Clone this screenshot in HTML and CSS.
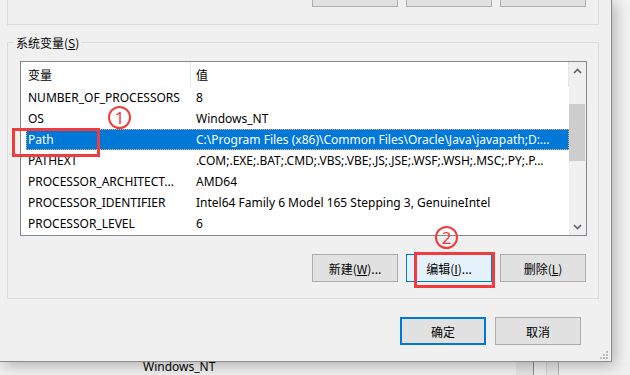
FILE: index.html
```html
<!DOCTYPE html>
<html lang="zh-CN">
<head>
<meta charset="utf-8">
<title>环境变量</title>
<link rel="stylesheet" href="styles.css">
</head>
<body>
<div class="screen">
  <div class="dialog">
    <div class="user-group">
      <span class="top-btn"></span>
      <span class="top-btn"></span>
      <span class="top-btn"></span>
    </div>

    <fieldset class="sys-group">
      <legend>系统变量(<u>S</u>)</legend>
      <div class="listview">
        <div class="list-main">
          <div class="list-head">
            <div class="h1">变量</div>
            <div class="h2">值</div>
          </div>
          <div class="row"><div class="c1">NUMBER_OF_PROCESSORS</div><div class="c2">8</div></div>
          <div class="row"><div class="c1">OS</div><div class="c2">Windows_NT</div></div>
          <div class="row sel"><div class="c1">Path</div><div class="c2">C:\Program Files (x86)\Common Files\Oracle\Java\javapath;D:...</div></div>
          <div class="row"><div class="c1">PATHEXT</div><div class="c2">.COM;.EXE;.BAT;.CMD;.VBS;.VBE;.JS;.JSE;.WSF;.WSH;.MSC;.PY;.P...</div></div>
          <div class="row"><div class="c1">PROCESSOR_ARCHITECT...</div><div class="c2">AMD64</div></div>
          <div class="row"><div class="c1">PROCESSOR_IDENTIFIER</div><div class="c2">Intel64 Family 6 Model 165 Stepping 3, GenuineIntel</div></div>
          <div class="row"><div class="c1">PROCESSOR_LEVEL</div><div class="c2">6</div></div>
        </div>
        <div class="vscroll">
          <div class="arrow">
            <svg width="9" height="6" viewBox="0 0 9 6"><path d="M1 5 L4.5 1.5 L8 5" fill="none" stroke="#606060" stroke-width="1.6"/></svg>
          </div>
          <div class="track"><div class="thumb"></div></div>
          <div class="arrow">
            <svg width="9" height="6" viewBox="0 0 9 6"><path d="M1 1 L4.5 4.5 L8 1" fill="none" stroke="#606060" stroke-width="1.6"/></svg>
          </div>
        </div>
      </div>
      <div class="btn-row">
        <button class="btn">新建(<u>W</u>)...</button>
        <button class="btn hover">编辑(<u>I</u>)...</button>
        <button class="btn">删除(<u>L</u>)</button>
      </div>
    </fieldset>

    <div class="footer">
      <button class="btn default">确定</button>
      <button class="btn">取消</button>
    </div>

    <svg class="grip" width="8" height="8" viewBox="0 0 8 8">
      <rect x="6" y="0" width="2" height="2" fill="#bcbcbc"/>
      <rect x="3" y="3" width="2" height="2" fill="#bcbcbc"/>
      <rect x="6" y="3" width="2" height="2" fill="#bcbcbc"/>
      <rect x="0" y="6" width="2" height="2" fill="#bcbcbc"/>
      <rect x="3" y="6" width="2" height="2" fill="#bcbcbc"/>
      <rect x="6" y="6" width="2" height="2" fill="#bcbcbc"/>
    </svg>
  </div>

  <div class="behind">
    <span class="bt-text">Windows_NT</span>
    <span class="bt-scroll"><span class="seg a"></span><span class="seg b"></span><span class="seg c"></span></span>
  </div>

  <div class="mark mark1"></div>
  <div class="mark mark2"></div>
  <div class="num num1">1</div>
  <div class="num num2">2</div>
</div>
</body>
</html>
```
FILE: styles.css
```css
* { box-sizing: border-box; }

body {
  margin: 0;
  background: #f2f2f2;
  font-family: "Noto Sans", "Noto Sans CJK SC", sans-serif;
  font-size: 12px;
  color: #000;
}

.screen {
  position: relative;
  width: 630px;
  height: 375px;
  overflow: hidden;
  background: #f2f2f2;
}

.dialog {
  position: relative;
  z-index: 1;
  width: 612px;
  height: 362px;
  background: #f0f0f0;
  border-right: 1px solid #8a8a8a;
  border-bottom: 1px solid #8a8a8a;
  box-shadow: 3px 3px 14px rgba(0, 0, 0, 0.28);
  display: flex;
  flex-direction: column;
}

/* upper (user variables) group, only its bottom is visible */
.user-group {
  height: 25px;
  margin: 0 12px 0 7px;
  border: 1px solid #dcdcdc;
  border-top: 0;
  display: flex;
  justify-content: flex-end;
  align-items: flex-start;
  gap: 8px;
  padding-right: 12px;
  flex: none;
}

.top-btn {
  width: 86px;
  height: 7px;
  background: #e1e1e1;
  border: 1px solid #adadad;
  border-top: 0;
}

/* system variables group */
.sys-group {
  margin: 10px 12px 0 7px;
  padding: 11px 12px 16px 12px;
  border: 1px solid #dcdcdc;
  min-width: 0;
  flex: none;
}

.sys-group legend {
  padding: 0 2px;
  margin-left: -6px;
  line-height: 15px;
  font-size: 12px;
  font-family: "Noto Sans CJK SC", "Noto Sans", sans-serif;
}

.listview {
  height: 175px;
  margin-right: -1px;
  border: 1px solid #828790;
  background: #fff;
  display: flex;
}

.list-main {
  flex: 1;
  display: flex;
  flex-direction: column;
  min-width: 0;
}

.list-head {
  height: 25px;
  display: flex;
  flex: none;
  font-family: "Noto Sans CJK SC", sans-serif;
}

.list-head .h1 {
  width: 170px;
  padding-left: 7px;
  line-height: 25px;
  border-right: 1px solid #e5e5e5;
}

.list-head .h2 {
  flex: 1;
  padding-left: 5px;
  line-height: 25px;
  border-right: 1px solid #e5e5e5;
}

.row {
  height: 21px;
  line-height: 21px;
  margin-left: 5px;
  display: flex;
  white-space: nowrap;
  flex: none;
}

.row .c1 {
  width: 164px;
  padding-left: 2px;
  overflow: hidden;
}

.row .c2 {
  flex: 1;
  padding-left: 6px;
  overflow: hidden;
}

.row.sel {
  background: #0078d7;
  color: #fff;
  outline: 1px dotted #f3b06a;
  outline-offset: -1px;
}

.vscroll {
  width: 17px;
  flex: none;
  background: #f0f0f0;
  display: flex;
  flex-direction: column;
}

.arrow {
  height: 17px;
  flex: none;
  display: flex;
  align-items: center;
  justify-content: center;
}

.track {
  flex: 1;
  padding-top: 25px;
}

.thumb {
  height: 57px;
  width: 16px;
  background: #cdcdcd;
}

.btn-row {
  margin-top: 18px;
  display: flex;
  justify-content: flex-end;
  gap: 8px;
}

.btn {
  width: 86px;
  height: 28px;
  margin: 0;
  padding: 0;
  border: 1px solid #adadad;
  background: #e1e1e1;
  font-family: "Noto Sans CJK SC", "Noto Sans", sans-serif;
  font-size: 12px;
  color: #000;
  display: flex;
  align-items: center;
  justify-content: center;
}

.btn.hover {
  background: #e5f1fb;
  border-color: #0078d7;
}

.btn.default {
  border: 2px solid #0078d7;
}

.footer {
  margin-top: 18px;
  display: flex;
  justify-content: flex-end;
  gap: 9px;
  padding-right: 30px;
  flex: none;
}

.grip {
  position: absolute;
  right: 3px;
  bottom: 2px;
}

/* window behind the dialog */
.behind {
  height: 13px;
  display: flex;
  align-items: flex-start;
  background: #f0f0f0;
}

.bt-text {
  margin-left: 143px;
  margin-top: -3px;
  width: 373px;
  line-height: 16px;
  flex: none;
}

.bt-scroll {
  width: 43px;
  height: 13px;
  display: flex;
  flex: none;
}

.bt-scroll .seg { height: 13px; }
.bt-scroll .a { width: 18px; background: #e4e4e4; border-right: 1px solid #8e8e8e; }
.bt-scroll .b { width: 13px; background: #ececec; border-right: 1px solid #cfcfcf; }
.bt-scroll .c { width: 12px; background: #e6e6e6; border-right: 1px solid #b5b5b5; }

/* annotations */
.mark {
  position: absolute;
  z-index: 2;
  border: 3px solid #f03c3c;
}

.mark1 { left: 12px; top: 128px; width: 88px; height: 29px; }
.mark2 { left: 414px; top: 252px; width: 81px; height: 36px; }

.num {
  position: absolute;
  z-index: 2;
  width: 23px;
  height: 23px;
  border: 2px solid #f03c3c;
  border-radius: 50%;
  color: #f03c3c;
  font-family: "Noto Sans", sans-serif;
  font-size: 17px;
  line-height: 16px;
  display: flex;
  align-items: center;
  justify-content: center;
}

.num1 { left: 108px; top: 106px; }
.num2 { left: 435px; top: 226px; }
```
